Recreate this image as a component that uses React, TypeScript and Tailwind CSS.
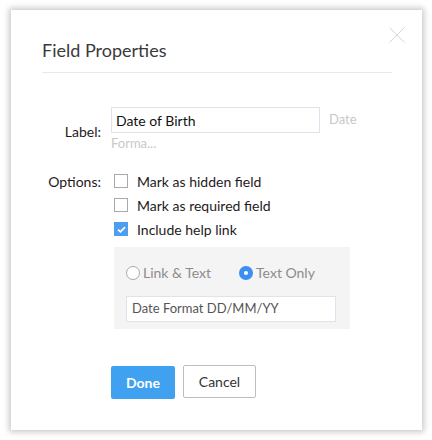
import { useState } from 'react';

/**
 * Field Properties dialog
 */
const font = { fontFamily: 'Lato, "Open Sans", "Liberation Sans", sans-serif' };

function Checkbox({ checked, label }: { checked: boolean; label: string }) {
  return (
    <div className="flex h-[24px] items-center">
      <span
        className={
          checked
            ? 'ml-[3px] flex h-[14px] w-[14px] items-center justify-center bg-[#4c9ff0]'
            : 'ml-[3px] h-[14px] w-[14px] border border-[#a9a9a9] bg-white'
        }
      >
        {checked && (
          <svg width="9" height="7" viewBox="0 0 9 7">
            <path d="M1 3.6 L3.4 5.8 L8 1.2" fill="none" stroke="#fff" strokeWidth="1.8" />
          </svg>
        )}
      </span>
      <span className="ml-[9px] text-[14px] text-[#1f1a22]">{label}</span>
    </div>
  );
}

function Radio({ selected, label }: { selected: boolean; label: string }) {
  return (
    <div className="flex items-center">
      {selected ? (
        <span className="flex h-[14px] w-[14px] items-center justify-center rounded-full bg-[#3a8ff0]">
          <span className="h-[4px] w-[4px] rounded-full bg-white" />
        </span>
      ) : (
        <span className="h-[14px] w-[14px] rounded-full border border-[#a9a9a9] bg-white" />
      )}
      <span className="ml-[3px] text-[14px] text-[#8c8c8c]">{label}</span>
    </div>
  );
}

export default function App() {
  const [label] = useState('Date of Birth');

  return (
    <div className="h-[440px] w-[432px] bg-white pl-[11px] pt-[10px]" style={font}>
      <div className="relative h-[420px] w-[411px] bg-white shadow-[0_0_6px_2px_rgba(0,0,0,0.22)]">
        {/* close */}
        <svg className="absolute right-[17px] top-[17px]" width="16" height="16" viewBox="0 0 16 16">
          <path d="M0.5 0.5 L15.5 15.5 M15.5 0.5 L0.5 15.5" stroke="#d6d6d6" strokeWidth="1" />
        </svg>

        <div className="px-[31px] pt-[28px]">
          <h1 className="text-[18px] leading-[24px] text-[#3a3a3a]">Field Properties</h1>
          <div className="mt-[10px] h-px w-[350px] bg-[#e9e9e9]" />
        </div>

        {/* label row */}
        <div className="mt-[34px] flex items-center">
          <div className="w-[90px] pt-[4px] text-right text-[14px] text-[#1f1a22]">Label:</div>
          <div className="ml-[10px]">
            <div className="flex items-center">
              <div className="flex h-[26px] w-[209px] items-center border border-[#dde4ec] pl-[4px] text-[14px] text-[#111]">
                {label}
              </div>
              <span className="ml-[9px] text-[13px] text-[#c8c8c8]">Date</span>
            </div>
            <div className="mt-[2px] text-[13px] leading-[16px] text-[#c8c8c8]">Forma...</div>
          </div>
        </div>

        {/* options */}
        <div className="mt-[18px] flex">
          <div className="flex h-[24px] w-[90px] items-center justify-end text-[14px] text-[#1f1a22]">Options:</div>
          <div className="ml-[10px]">
            <Checkbox checked={false} label="Mark as hidden field" />
            <Checkbox checked={false} label="Mark as required field" />
            <Checkbox checked label="Include help link" />

            <div className="ml-[3px] mt-[6px] h-[82px] w-[236px] bg-[#f4f4f4] pl-[12px] pt-[15px]">
              <div className="flex items-center gap-[28px]">
                <Radio selected={false} label="Link & Text" />
                <Radio selected label="Text Only" />
              </div>
              <div className="mt-[13px] flex h-[26px] w-[210px] items-center border border-[#dde4ec] bg-white pl-[5px] text-[13px] text-[#555]">
                Date Format DD/MM/YY
              </div>
            </div>
          </div>
        </div>

        {/* buttons */}
        <div className="ml-[100px] mt-[37px] flex items-start gap-[8px]">
          <button className="h-[33px] w-[64px] rounded-[2px] bg-[#40a1f0] text-[14px] font-bold text-white">Done</button>
          <button className="-mt-px h-[33px] w-[73px] rounded-[2px] border border-[#bdbdbd] bg-white text-[14px] text-[#333]">
            Cancel
          </button>
        </div>
      </div>
    </div>
  );
}
